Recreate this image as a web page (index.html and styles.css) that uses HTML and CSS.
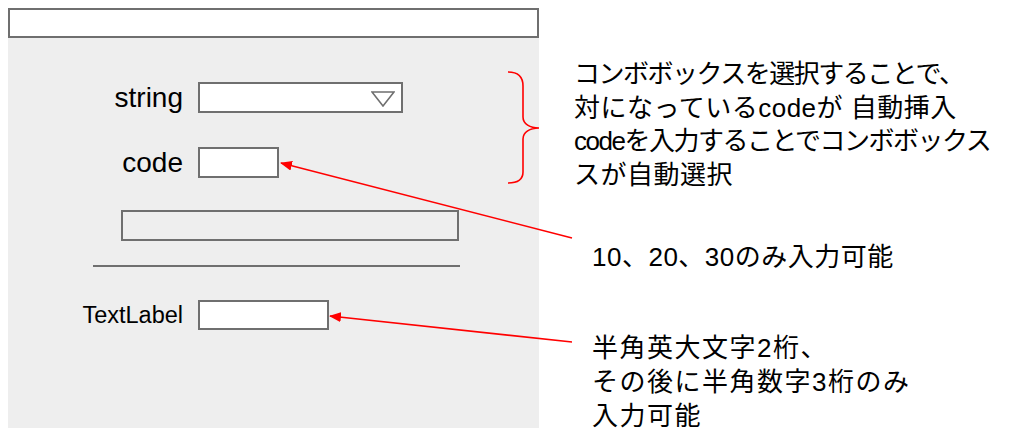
FILE: index.html
```html
<!DOCTYPE html>
<html lang="ja">
<head>
    <meta charset="UTF-8">
    <meta name="viewport" content="width=device-width, initial-scale=1.0">
    <title>入力フォーム仕様</title>
    <link rel="stylesheet" href="styles.css">
</head>
<body>
    <div class="page">
        <!-- 画面イメージ -->
        <div class="form">
            <div class="titlebar"></div>
            <div class="panel">
                <div class="row row-string">
                    <span class="label">string</span>
                    <div class="field combo">
                        <svg class="combo-arrow" width="24" height="16" viewBox="0 0 24 16">
                            <path d="M1 1 L23 1 L12 15 Z" fill="none" stroke="#6f6f6f" stroke-width="1.6" stroke-linejoin="miter"/>
                        </svg>
                    </div>
                </div>
                <div class="row row-code">
                    <span class="label">code</span>
                    <div class="field field-code"></div>
                </div>
                <div class="button"></div>
                <hr class="divider">
                <div class="row row-text">
                    <span class="label label-small">TextLabel</span>
                    <div class="field field-text"></div>
                </div>
            </div>
        </div>

        <!-- 説明 -->
        <div class="notes">
            <p class="note note-combo">
                <span class="tight">コンボボックスを選択することで、</span><br>
                <span class="wide">対になっているcodeが 自動挿入</span><br>
                <span class="tight">codeを入力することでコンボボックス</span><br>
                <span class="wide">スが自動選択</span>
            </p>
            <p class="note note-code">10、20、30のみ入力可能</p>
            <p class="note note-text">
                半角英大文字2桁、<br>
                その後に半角数字3桁のみ<br>
                入力可能
            </p>
        </div>
    </div>

    <!-- 注釈の矢印と括弧 -->
    <svg class="callouts" width="1014" height="439" viewBox="0 0 1014 439">
        <defs>
            <marker id="head" viewBox="0 0 12 10" refX="11" refY="5" markerWidth="12" markerHeight="10" markerUnits="userSpaceOnUse" orient="auto">
                <path d="M0 0 L12 5 L0 10 Z" fill="#ff0000"/>
            </marker>
        </defs>
        <path d="M508 72 C518 72 523 76 523 86 L523 117 C523 124 530 128 539 128 C530 128 523 132 523 139 L523 172 C523 179 518 183 508 183" fill="none" stroke="#ff0000" stroke-width="1.6"/>
        <line x1="572" y1="238" x2="281" y2="163" stroke="#ff0000" stroke-width="1.6" marker-end="url(#head)"/>
        <line x1="572" y1="342" x2="330" y2="316" stroke="#ff0000" stroke-width="1.6" marker-end="url(#head)"/>
    </svg>
</body>
</html>
```

FILE: styles.css
```css
body {
    margin: 8px;
    font-family: "Liberation Sans", "Noto Sans CJK JP", sans-serif;
    color: #000;
    background-color: #fff;
}
.page {
    display: flex;
}
.form {
    width: 531px;
    flex-shrink: 0;
}
.titlebar {
    height: 30px;
    box-sizing: border-box;
    border: 2px solid #6f6f6f;
    background-color: #fff;
}
.panel {
    height: 390px;
    box-sizing: border-box;
    padding-top: 44px;
    background-color: #eeeeee;
}
.row {
    display: flex;
    align-items: center;
    gap: 15px;
    height: 31px;
}
.label {
    width: 175px;
    text-align: right;
    font-size: 28px;
}
.label-small {
    font-size: 23.5px;
}
.field {
    height: 31px;
    box-sizing: border-box;
    border: 2px solid #6f6f6f;
    background-color: #fff;
}
.combo {
    width: 205px;
    display: flex;
    align-items: center;
    justify-content: flex-end;
    padding-right: 6px;
}
.combo-arrow {
    display: block;
    margin-top: 2px;
}
.field-code {
    width: 81px;
}
.field-text {
    width: 131px;
    height: 30px;
}
.row-string {
    margin-bottom: 34px;
}
.row-code {
    margin-bottom: 32px;
}
.button {
    margin-left: 113px;
    width: 338px;
    height: 31px;
    box-sizing: border-box;
    border: 2px solid #6f6f6f;
    background-color: #eeeeee;
}
.divider {
    margin: 24px 0 0 85px;
    width: 367px;
    height: 0;
    border: none;
    border-top: 2px solid #6f6f6f;
}
.row-text {
    margin-top: 33px;
    height: 30px;
}
.notes {
    display: flex;
    flex-direction: column;
    margin-left: 35px;
}
.note {
    margin: 0;
    font-size: 26px;
    line-height: 34px;
    white-space: nowrap;
}
.note-combo {
    margin-top: 50px;
    line-height: 33.5px;
}
.tight {
    letter-spacing: -1.5px;
}
.wide {
    letter-spacing: 0.5px;
}
.note-code {
    margin: 48px 0 0 18px;
    letter-spacing: 0.5px;
}
.note-text {
    margin: 57px 0 0 18px;
    letter-spacing: 1.5px;
}
.callouts {
    position: absolute;
    top: 0;
    left: 0;
    pointer-events: none;
}
```
